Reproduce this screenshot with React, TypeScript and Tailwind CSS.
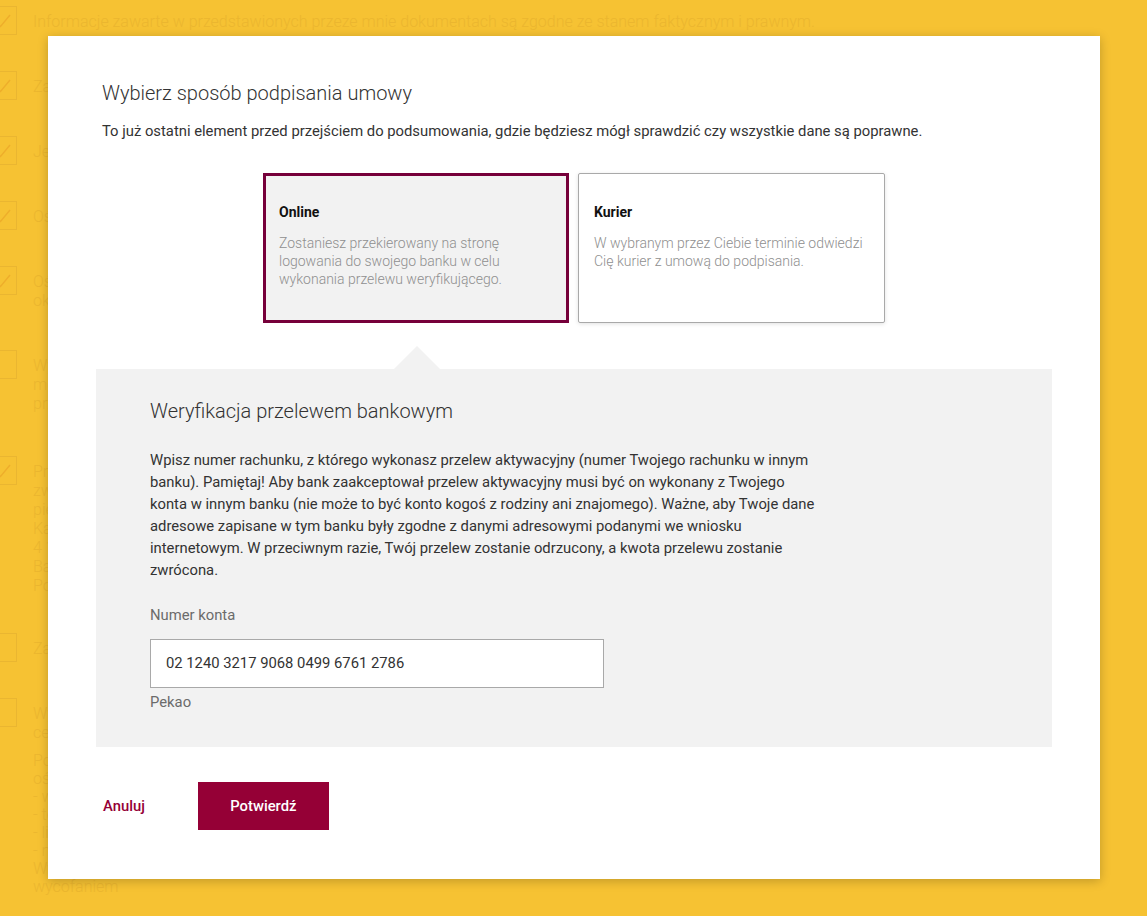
import React from "react";

function Check({ checked = true }: { checked?: boolean }) {
  return (
    <div className="-ml-[12px] flex h-[29px] w-[29px] shrink-0 items-center justify-center border border-[#eab631]">
      {checked && (
        <svg width="18" height="18" viewBox="0 0 18 18" fill="none">
          <path d="M2 10 L6.5 14.5 L16 3" stroke="#eeae2b" strokeWidth="1.4" />
        </svg>
      )}
    </div>
  );
}

function BgRow({ className, checked, lines }: { className: string; checked?: boolean; lines: string[] }) {
  return (
    <div className={`flex items-start ${className}`}>
      <Check checked={checked} />
      <div className="ml-[16px] pt-[6px] text-[16px] font-light leading-[19px] text-[#ebb62f]">
        {lines.map((l, i) => (
          <div key={i} className="whitespace-nowrap">{l}</div>
        ))}
      </div>
    </div>
  );
}

export default function App() {
  return (
    <div className="relative h-[916px] w-[1147px] overflow-hidden bg-[#f6c233] font-['Roboto','Liberation_Sans',sans-serif]">
      {/* page behind the dialog */}
      <div className="flex flex-col">
        <BgRow className="mt-[6px]" lines={["Informacje zawarte w przedstawionych przeze mnie dokumentach są zgodne ze stanem faktycznym i prawnym."]} />
        <BgRow className="mt-[36px]" lines={["Zapoznałem się z regulaminem i akceptuję jego postanowienia."]} />
        <BgRow className="mt-[36px]" lines={["Jestem rezydentem podatkowym w Polsce."]} />
        <BgRow className="mt-[36px]" lines={["Oświadczam, że nie jestem osobą zajmującą eksponowane stanowisko polityczne."]} />
        <BgRow className="mt-[36px]" lines={["Oświadczam, że zapoznałem się z informacją o przetwarzaniu danych osobowych oraz", "okresie ich przechowywania."]} />
        <BgRow className="mt-[40px]" checked={false} lines={["Wyrażam zgodę na przetwarzanie moich danych osobowych w celach marketingowych,", "mojego rachunku oraz produktów oferowanych przez bank i podmioty z grupy,", "przesyłanych drogą elektroniczną."]} />
        <BgRow className="mt-[43px]" lines={["Przyjmuję do wiadomości, że w przypadku odstąpienia od umowy bank", "zwróci mi wszystkie otrzymane płatności nie później niż w terminie 14 dni,", "pieniądze zostaną przekazane na rachunek wskazany we wniosku.", "Kapitał zakładowy w wysokości", "4 136 425 470 zł wpłacony w całości.", "Bank Polska Kasa Opieki S.A.", "Poznaj szczegóły oferty."]} />
        <BgRow className="mt-[38px]" checked={false} lines={["Zapoznałem się z informacją dotyczącą prawa do odstąpienia od umowy."]} />
        <BgRow className="mt-[36px]" checked={false} lines={["Wyrażam zgodę na przekazywanie informacji handlowych w", "celach marketingowych przez telefon."]} />
        <div className="ml-[33px] mt-[10px] text-[16px] font-light leading-[18px] text-[#ebb62f]">
          <div>Powyższe zgody mogę w każdej chwili odwołać, składając</div>
          <div>oświadczenie w dowolnej formie, w tym:</div>
          <div>- w oddziale banku,</div>
          <div>- telefonicznie,</div>
          <div>- listownie,</div>
          <div>- na stronie internetowej banku.</div>
          <div>Wycofanie zgody nie wpływa na zgodność z prawem przetwarzania przed jej</div>
          <div>wycofaniem</div>
        </div>
      </div>

      {/* dialog */}
      <div className="absolute left-[48px] top-[36px] w-[1052px] bg-white px-[48px] pb-[49px] pt-[45px] shadow-[0_2px_10px_rgba(0,0,0,0.22)]">
        <h2 className="ml-[6px] text-[20px] font-light leading-[24px] text-[#333]">Wybierz sposób podpisania umowy</h2>
        <p className="ml-[6px] mt-[16px] text-[14.8px] leading-[20px] text-[#333]">
          To już ostatni element przed przejściem do podsumowania, gdzie będziesz mógł sprawdzić czy wszystkie dane są poprawne.
        </p>

        <div className="mt-[32px] flex justify-center gap-[9px]">
          <div className="h-[150px] w-[306px] border-[3px] border-[#76003a] bg-[#f2f2f2] pl-[13px] pr-[10px] pt-[26px]">
            <div className="text-[14px] font-bold leading-[20px] text-[#111]">Online</div>
            <div className="mt-[12px] text-[14px] font-light leading-[18px] text-[#8f8f8f]">
              Zostaniesz przekierowany na stronę<br />logowania do swojego banku w celu<br />wykonania przelewu weryfikującego.
            </div>
          </div>
          <div className="h-[150px] w-[307px] rounded-[2px] border border-[#a9a9a9] bg-white pl-[15px] pr-[10px] pt-[28px] shadow-[0_1px_4px_rgba(0,0,0,0.12)]">
            <div className="text-[14px] font-bold leading-[20px] text-[#111]">Kurier</div>
            <div className="mt-[12px] text-[14px] font-light leading-[18px] text-[#8f8f8f]">
              W wybranym przez Ciebie terminie odwiedzi<br />Cię kurier z umową do podpisania.
            </div>
          </div>
        </div>

        <div className="pt-[23px]">
          <div className="ml-[298px] h-0 w-0 border-b-[23px] border-l-[23px] border-r-[23px] border-b-[#f2f2f2] border-l-transparent border-r-transparent" />
        </div>

        <div className="bg-[#f2f2f2] pb-[35px] pl-[54px] pt-[30px]">
          <h3 className="text-[20px] font-light leading-[24px] text-[#333]">Weryfikacja przelewem bankowym</h3>
          <p className="mt-[26px] text-[14.8px] leading-[22px] text-[#333]">
            Wpisz numer rachunku, z którego wykonasz przelew aktywacyjny (numer Twojego rachunku w innym<br />
            banku). Pamiętaj! Aby bank zaakceptował przelew aktywacyjny musi być on wykonany z Twojego<br />
            konta w innym banku (nie może to być konto kogoś z rodziny ani znajomego). Ważne, aby Twoje dane<br />
            adresowe zapisane w tym banku były zgodne z danymi adresowymi podanymi we wniosku<br />
            internetowym. W przeciwnym razie, Twój przelew zostanie odrzucony, a kwota przelewu zostanie<br />
            zwrócona.
          </p>
          <div className="mt-[24px] text-[14.8px] leading-[20px] text-[#6b6b6b]">Numer konta</div>
          <div className="mt-[14px] flex h-[49px] w-[454px] items-center border border-[#a9a9a9] bg-white pl-[15px] text-[14.8px] text-[#333]">
            02 1240 3217 9068 0499 6761 2786
          </div>
          <div className="mt-[4px] text-[14.8px] leading-[20px] text-[#6b6b6b]">Pekao</div>
        </div>

        <div className="mt-[35px] flex items-center">
          <button className="ml-[7px] text-[14.8px] font-medium text-[#950036]">Anuluj</button>
          <button className="ml-[53px] h-[48px] w-[131px] bg-[#950036] text-[14.8px] font-medium text-white">Potwierdź</button>
        </div>
      </div>
    </div>
  );
}
